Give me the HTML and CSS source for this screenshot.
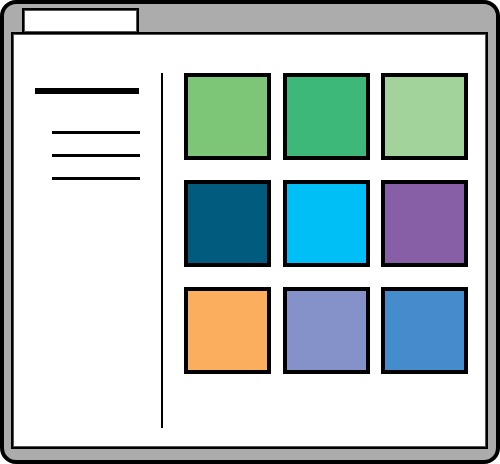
FILE: index.html
```html
<!DOCTYPE html>
<html lang="en">
<head>
<meta charset="utf-8">
<meta name="viewport" content="width=device-width, initial-scale=1">
<link rel="stylesheet" href="styles.css">
</head>
<body>
<div class="window">
  <div class="tab"></div>
  <main class="panel">
    <aside class="sidebar">
      <div class="heading"></div>
      <div class="lines">
        <div class="line"></div>
        <div class="line"></div>
        <div class="line"></div>
      </div>
    </aside>
    <section class="grid">
      <div class="tile green"></div>
      <div class="tile emerald"></div>
      <div class="tile mint"></div>
      <div class="tile navy"></div>
      <div class="tile cyan"></div>
      <div class="tile purple"></div>
      <div class="tile orange"></div>
      <div class="tile periwinkle"></div>
      <div class="tile blue"></div>
    </section>
  </main>
</div>
</body>
</html>
```
FILE: styles.css
```css
* {
  box-sizing: border-box;
}

body {
  margin: 0;
  background: #fff;
}

.window {
  display: flex;
  flex-direction: column;
  min-height: 100vh;
  padding: 4px 8px 11px 7px;
  border: 4px solid #000;
  border-radius: 16px;
  background: #acacac;
}

.tab {
  width: 117px;
  height: 24px;
  margin-left: 11px;
  border: 2px solid #000;
  border-bottom: 0;
  background: #fff;
  box-shadow: inset 0 0 0 1px #555;
}

.panel {
  flex: 1;
  display: flex;
  padding: 39px 18px 19px 22px;
  border: 2px solid #000;
  background: #fff;
  box-shadow: inset 0 0 0 1px #555;
}

.sidebar {
  width: 128px;
  padding: 15px 21px 0 0;
  border-right: 2px solid #000;
}

.heading {
  width: 104px;
  height: 6px;
  background: #000;
}

.lines {
  display: flex;
  flex-direction: column;
  gap: 20px;
  margin: 37px 0 0 17px;
}

.line {
  height: 3px;
  background: #000;
}

.grid {
  flex: 1;
  display: grid;
  grid-template-columns: repeat(3, 87px);
  justify-content: space-between;
  align-content: start;
  row-gap: 20px;
  padding-left: 21px;
}

.tile {
  height: 87px;
  border: 4px solid #000;
}

.green { background: #7dc577; }
.emerald { background: #3eb878; }
.mint { background: #a2d39b; }
.navy { background: #005b7f; }
.cyan { background: #00bff6; }
.purple { background: #875fa7; }
.orange { background: #fbae5d; }
.periwinkle { background: #8492c9; }
.blue { background: #448ccb; }
```
